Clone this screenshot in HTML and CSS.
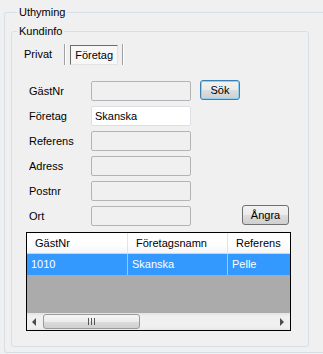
FILE: index.html
```html
<!DOCTYPE html>
<html lang="sv">
<head>
    <meta charset="UTF-8">
    <title>Uthyrning</title>
    <link rel="stylesheet" href="styles.css">
</head>
<body>
    <fieldset class="group group-outer">
        <legend>Uthyming</legend>
        <fieldset class="group group-inner">
            <legend>Kundinfo</legend>

            <div class="tabs">
                <span class="tab">Privat</span>
                <span class="tab-sep"></span>
                <span class="tab tab-active">Företag</span>
                <span class="tab-sep"></span>
            </div>

            <div class="form">
                <label>GästNr</label>
                <input class="field" type="text" disabled>
                <button class="btn btn-default">Sök</button>

                <label>Företag</label>
                <input class="field field-edit" type="text" value="Skanska">
                <span></span>

                <label>Referens</label>
                <input class="field" type="text" disabled>
                <span></span>

                <label>Adress</label>
                <input class="field" type="text" disabled>
                <span></span>

                <label>Postnr</label>
                <input class="field" type="text" disabled>
                <span></span>

                <label>Ort</label>
                <input class="field" type="text" disabled>
                <button class="btn btn-undo">Ångra</button>
            </div>

            <div class="grid">
                <div class="grid-head">
                    <div class="cell cell-first">GästNr</div>
                    <div class="cell">Företagsnamn</div>
                    <div class="cell">Referens</div>
                </div>
                <div class="grid-row selected">
                    <div class="cell cell-first">1010</div>
                    <div class="cell">Skanska</div>
                    <div class="cell">Pelle</div>
                </div>
                <div class="grid-empty"></div>
                <div class="hscroll">
                    <span class="arrow arrow-left"></span>
                    <div class="track">
                        <div class="thumb"><span class="grip"></span></div>
                    </div>
                    <span class="arrow arrow-right"></span>
                </div>
            </div>
        </fieldset>
    </fieldset>
</body>
</html>
```

FILE: styles.css
```css
html, body {
    margin: 0;
    padding: 0;
    overflow: hidden;
}

body {
    width: 323px;
    height: 354px;
    background-color: #f0f0f0;
    color: #000000;
    font-family: "Liberation Sans", Arial, sans-serif;
    font-size: 11px;
}

/* group boxes */
.group {
    margin: 0;
    padding: 0;
    min-width: 0;
    border: 1px solid #d5dfe5;
    border-radius: 3px;
    box-sizing: border-box;
}

.group legend {
    padding: 0 2px;
    line-height: 13px;
}

.group-outer {
    margin: 6px 0 0 4px;
    padding: 6px 0 0 6px;
    height: 347px;
    border-right: none;
    border-radius: 3px 0 0 3px;
}

.group-outer > legend {
    margin-left: 6px;
}

.group-inner {
    width: 298px;
    height: 322px;
}

.group-inner > legend {
    margin-left: 5px;
}

/* tabs (flat buttons) */
.tabs {
    display: flex;
    align-items: flex-start;
    height: 21px;
    margin: 6px 0 0 12px;
}

.tab {
    line-height: 20px;
}

.tab-sep {
    width: 0;
    height: 21px;
    margin: 0 0 0 12px;
    border-left: 1px solid #a0a0a0;
    border-right: 1px solid #ffffff;
}

.tab-active {
    box-sizing: border-box;
    width: 48px;
    height: 20px;
    margin: 1px 4px 0 4px;
    line-height: 18px;
    text-align: center;
    background-color: #f7f7f7;
    border: 1px solid;
    border-color: #6d6d6d #e3e3e3 #e3e3e3 #6d6d6d;
}

.tab-active + .tab-sep {
    margin-left: 0;
}

/* form */
.form {
    display: grid;
    grid-template-columns: 62px 100px 100px;
    grid-auto-rows: 20px;
    row-gap: 5px;
    margin: 16px 0 0 17px;
}

.form label {
    align-self: center;
}

.field {
    box-sizing: border-box;
    width: 100px;
    height: 20px;
    margin: 0;
    padding: 0 3px;
    font: inherit;
    color: #000000;
    background-color: #f0f0f0;
    border: 1px solid #b4b4b4;
    border-radius: 2px;
    outline: none;
}

.field-edit {
    background-color: #ffffff;
    border-color: #dcdfe3;
}

.btn {
    box-sizing: border-box;
    height: 20px;
    margin: -1px 0 0 0;
    padding: 0;
    font: inherit;
    color: #000000;
    border: 1px solid #707070;
    border-radius: 3px;
    background: linear-gradient(#f2f2f2 0%, #ebebeb 50%, #dddddd 51%, #cfcfcf 100%);
}

.btn-default {
    width: 40px;
    margin-left: 9px;
    border-color: #3c7fb1;
    box-shadow: inset 0 0 0 1px #8fd0f0;
}

.btn-undo {
    width: 47px;
    margin-left: 51px;
}

/* data grid */
.grid {
    display: flex;
    flex-direction: column;
    box-sizing: border-box;
    width: 265px;
    height: 99px;
    margin: 6px 0 0 14px;
    border: 1px solid #000000;
    background-color: #ababab;
    overflow: hidden;
}

.grid-head,
.grid-row {
    display: flex;
    flex-shrink: 0;
    height: 21px;
}

.grid-head {
    background: linear-gradient(#ffffff 0%, #ffffff 55%, #f4f5f7 100%);
    border-bottom: 1px solid #d5d5d5;
    box-sizing: border-box;
}

.cell {
    flex-shrink: 0;
    box-sizing: border-box;
    width: 100px;
    padding-left: 4px;
    line-height: 20px;
    white-space: nowrap;
    overflow: hidden;
    border-right: 1px solid #e3e3e3;
}

.cell-first {
    width: 101px;
}

.grid-head .cell {
    padding-left: 8px;
    border-right-color: #e3e4e6;
}

.grid-row.selected {
    background-color: #3399ff;
    color: #ffffff;
}

.grid-row.selected .cell {
    line-height: 21px;
    border-right-color: #9fc7ef;
}

.grid-empty {
    flex: 1;
}

/* horizontal scrollbar */
.hscroll {
    display: flex;
    align-items: center;
    flex-shrink: 0;
    height: 17px;
    background: linear-gradient(#e3e3e3 0%, #f0f0f0 20%, #f0f0f0 80%, #e8e8e8 100%);
}

.arrow {
    width: 0;
    height: 0;
    border-top: 4px solid transparent;
    border-bottom: 4px solid transparent;
}

.arrow-left {
    margin: 0 6px 0 5px;
    border-right: 4px solid #4d4d4d;
}

.arrow-right {
    margin: 0 6px 0 5px;
    border-left: 4px solid #4d4d4d;
}

.track {
    flex: 1;
    height: 17px;
    display: flex;
    align-items: center;
}

.thumb {
    display: flex;
    align-items: center;
    justify-content: center;
    box-sizing: border-box;
    width: 97px;
    height: 15px;
    margin-left: 1px;
    border: 1px solid #9a9a9a;
    border-radius: 3px;
    background: linear-gradient(#f6f6f6 0%, #ececec 50%, #dcdcdc 51%, #d0d0d0 100%);
}

.grip {
    width: 7px;
    height: 7px;
    background: repeating-linear-gradient(90deg, #555555 0, #555555 1px, transparent 1px, transparent 3px);
}
```
